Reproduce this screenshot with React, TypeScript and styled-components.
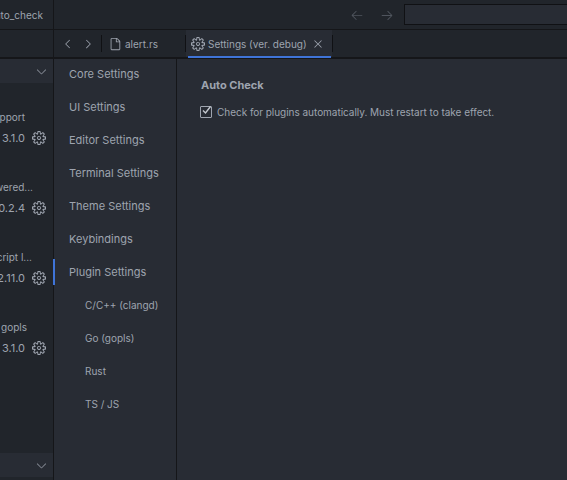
import React from "react";
import styled, { createGlobalStyle } from "styled-components";
import {
  VscArrowLeft,
  VscArrowRight,
  VscChevronDown,
  VscChevronLeft,
  VscChevronRight,
  VscClose,
  VscFile,
  VscSettingsGear,
} from "react-icons/vsc";

const GlobalStyle = createGlobalStyle`
  html, body {
    margin: 0;
    height: 100%;
    background: #282c34;
  }
  #root {
    height: 100%;
  }
`;

const Page = styled.div`
  width: 567px;
  height: 480px;
  display: flex;
  flex-direction: column;
  overflow: hidden;
  background: #282c34;
  color: #9ea4af;
  font-family: Inter, "Liberation Sans", sans-serif;
  font-size: 10px;
`;

const TitleBar = styled.div`
  height: 29px;
  flex: none;
  display: flex;
  background: #21252b;
  border-bottom: 1px solid #151619;
`;

const ProjectName = styled.div`
  width: 54px;
  flex: none;
  display: flex;
  justify-content: flex-end;
  align-items: center;
  box-sizing: border-box;
  padding: 0 10px 0 0;
  border-right: 1px solid #151619;
  white-space: nowrap;
  overflow: hidden;
`;

const TitleActions = styled.div`
  flex: 1;
  display: flex;
  justify-content: flex-end;
  align-items: center;
  gap: 16px;
  color: #4f545d;
  font-size: 14px;
`;

const SearchBox = styled.div`
  width: 162px;
  height: 19px;
  margin-left: -6px;
  margin-right: -1px;
  margin-top: -1px;
  background: #282c34;
  border: 1px solid #101114;
`;

const Workbench = styled.div`
  flex: 1;
  min-height: 0;
  display: flex;
`;

const Sidebar = styled.aside`
  width: 53px;
  flex: none;
  display: flex;
  flex-direction: column;
  background: #21252b;
  border-right: 1px solid #151619;
  overflow: hidden;
`;

const SidebarTop = styled.div`
  height: 27px;
  flex: none;
  border-bottom: 2px solid #151619;
`;

const SectionHeader = styled.div`
  height: 24px;
  flex: none;
  display: flex;
  justify-content: flex-end;
  align-items: center;
  padding-right: 4px;
  background: #282c34;
  font-size: 15px;
  color: #858a94;
`;

const PluginList = styled.div`
  flex: 1;
  display: flex;
  flex-direction: column;
  padding-top: 26px;
  gap: 33px;
`;

const Plugin = styled.div`
  height: 37px;
  display: flex;
  flex-direction: column;
  justify-content: space-between;
`;

const PluginName = styled.div<{ $end: number }>`
  display: flex;
  justify-content: flex-end;
  padding-right: ${(p) => 53 - p.$end}px;
  white-space: nowrap;
  line-height: 16px;
`;

const PluginMeta = styled.div`
  display: flex;
  justify-content: flex-end;
  align-items: center;
  gap: 7px;
  padding-right: 7px;
  white-space: nowrap;
  line-height: 16px;
  font-size: 11px;
`;

const GearIcon = styled(VscSettingsGear)`
  flex: none;
  font-size: 14px;
`;

const SidebarBottom = styled.div`
  height: 3px;
  flex: none;
`;

const Main = styled.main`
  flex: 1;
  min-width: 0;
  display: flex;
  flex-direction: column;
`;

const TabBar = styled.div`
  height: 27px;
  flex: none;
  display: flex;
  align-items: stretch;
  background: #21252b;
  border-bottom: 2px solid #151619;
`;

const TabNav = styled.div`
  width: 47px;
  flex: none;
  display: flex;
  align-items: center;
  justify-content: center;
  gap: 6px;
  font-size: 14px;
`;

const Divider = styled.div`
  width: 1px;
  height: 17px;
  align-self: center;
  background: #101114;
  flex: none;
`;

const Tab = styled.div<{ $active?: boolean; $width: number }>`
  width: ${(p) => p.$width}px;
  flex: none;
  position: relative;
  display: flex;
  align-items: center;
  box-sizing: border-box;
  padding-left: ${(p) => (p.$active ? 5 : 6)}px;
  gap: 3px;
  white-space: nowrap;
  background: ${(p) => (p.$active ? "#282c34" : "transparent")};
  &::after {
    content: "";
    display: ${(p) => (p.$active ? "block" : "none")};
    position: absolute;
    left: 2px;
    right: 1px;
    bottom: -1px;
    height: 2px;
    background: #3f74d8;
  }
`;

const TabIcon = styled.span`
  display: flex;
  font-size: 14px;
`;

const CloseIcon = styled(VscClose)`
  margin-left: 1px;
  font-size: 14px;
`;

const Body = styled.div`
  flex: 1;
  min-height: 0;
  display: flex;
`;

const SettingsNav = styled.nav`
  width: 123px;
  flex: none;
  box-sizing: border-box;
  margin-top: -2px;
  border-right: 1px solid #151619;
  display: flex;
  flex-direction: column;
`;

const NavItem = styled.div<{ $nested?: boolean; $selected?: boolean }>`
  height: 33px;
  flex: none;
  display: flex;
  align-items: center;
  position: relative;
  padding-left: ${(p) => (p.$nested ? 31 : 15)}px;
  font-size: ${(p) => (p.$nested ? 10 : 11)}px;
  white-space: nowrap;
  &::before {
    content: "";
    display: ${(p) => (p.$selected ? "block" : "none")};
    position: absolute;
    left: -1px;
    top: 4px;
    width: 2px;
    height: 26px;
    background: #3f74d8;
  }
`;

const Content = styled.section`
  flex: 1;
  padding: 19px 0 0 24px;
`;

const SectionTitle = styled.div`
  font-weight: 700;
  font-size: 11px;
  line-height: 14px;
  margin-bottom: 13px;
`;

const CheckRow = styled.label`
  display: flex;
  align-items: center;
  gap: 5px;
  line-height: 14px;
  letter-spacing: -0.03px;
`;

const CheckBox = styled.span`
  width: 10px;
  height: 10px;
  margin-left: -1px;
  flex: none;
  display: flex;
  border: 1px solid #9ea4af;
  border-radius: 1px;
  position: relative;
  svg {
    position: absolute;
    left: 0;
    top: -2px;
  }
`;

const plugins = [
  { name: "C/C++ clangd support", end: 25, meta: "3.1.0" },
  { name: "Rust analyzer powered...", end: 33, meta: "0.2.4" },
  { name: "TypeScript and JavaScript l...", end: 32, meta: "2.11.0" },
  { name: "Go language server gopls", end: 27, meta: "3.1.0" },
];

const navItems = [
  { label: "Core Settings" },
  { label: "UI Settings" },
  { label: "Editor Settings" },
  { label: "Terminal Settings" },
  { label: "Theme Settings" },
  { label: "Keybindings" },
  { label: "Plugin Settings", selected: true },
  { label: "C/C++ (clangd)", nested: true },
  { label: "Go (gopls)", nested: true },
  { label: "Rust", nested: true },
  { label: "TS / JS", nested: true },
];

const App = () => (
  <Page>
    <GlobalStyle />
    <TitleBar>
      <ProjectName>auto_check</ProjectName>
      <TitleActions>
        <VscArrowLeft />
        <VscArrowRight />
        <SearchBox />
      </TitleActions>
    </TitleBar>
    <Workbench>
      <Sidebar>
        <SidebarTop />
        <SectionHeader>
          <VscChevronDown />
        </SectionHeader>
        <PluginList>
          {plugins.map((plugin) => (
            <Plugin key={plugin.name}>
              <PluginName $end={plugin.end}>{plugin.name}</PluginName>
              <PluginMeta>
                {plugin.meta}
                <GearIcon />
              </PluginMeta>
            </Plugin>
          ))}
        </PluginList>
        <SectionHeader>
          <VscChevronDown />
        </SectionHeader>
        <SidebarBottom />
      </Sidebar>
      <Main>
        <TabBar>
          <TabNav>
            <VscChevronLeft />
            <VscChevronRight />
          </TabNav>
          <Divider />
          <Tab $width={83}>
            <TabIcon>
              <VscFile />
            </TabIcon>
            alert.rs
          </Tab>
          <Divider />
          <Tab $active $width={146}>
            <TabIcon>
              <VscSettingsGear />
            </TabIcon>
            Settings (ver. debug)
            <CloseIcon />
          </Tab>
          <Divider />
        </TabBar>
        <Body>
          <SettingsNav>
            {navItems.map((item) => (
              <NavItem key={item.label} $nested={item.nested} $selected={item.selected}>
                {item.label}
              </NavItem>
            ))}
          </SettingsNav>
          <Content>
            <SectionTitle>Auto Check</SectionTitle>
            <CheckRow>
              <CheckBox>
                <svg width="11" height="11" viewBox="0 0 11 11" fill="none">
                  <path d="M2 5.5 L4.5 8 L9.5 1.5" stroke="#c4c8cf" strokeWidth="1.4" />
                </svg>
              </CheckBox>
              Check for plugins automatically. Must restart to take effect.
            </CheckRow>
          </Content>
        </Body>
      </Main>
    </Workbench>
  </Page>
);

export default App;
